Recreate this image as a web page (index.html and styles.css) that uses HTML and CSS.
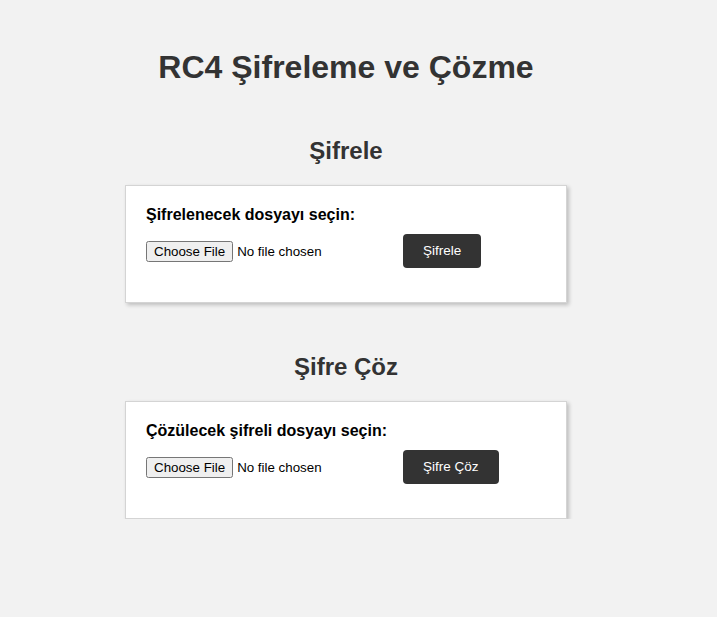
FILE: index.html
```html
<!DOCTYPE html>
<html lang="tr">
<head>
<meta charset="utf-8">
<title>RC4 Şifreleme ve Çözme</title>
<link rel="stylesheet" href="styles.css">
</head>
<body>
<div class="page">
  <h1 class="title">RC4 Şifreleme ve Çözme</h1>
  <section class="section section-first">
    <h2 class="section-title">Şifrele</h2>
    <form class="card">
      <label class="card-label" for="enc">Şifrelenecek dosyayı seçin:</label>
      <div class="row">
        <input class="file" type="file" id="enc">
        <button class="btn" type="button">Şifrele</button>
      </div>
    </form>
  </section>
  <section class="section section-second">
    <h2 class="section-title">Şifre Çöz</h2>
    <form class="card">
      <label class="card-label" for="dec">Çözülecek şifreli dosyayı seçin:</label>
      <div class="row">
        <input class="file" type="file" id="dec">
        <button class="btn" type="button">Şifre Çöz</button>
      </div>
    </form>
  </section>
</div>
</body>
</html>
```
FILE: styles.css
```css
html, body {
  margin: 0;
  padding: 0;
  background: #f2f2f2;
}
body {
  font-family: "Liberation Sans", Arial, Helvetica, sans-serif;
  color: #333;
}
.page {
  width: 692px;
  padding-top: 49px;
  display: flex;
  flex-direction: column;
  align-items: center;
}
.title {
  margin: 0;
  font-size: 32px;
  line-height: 37px;
  font-weight: bold;
  color: #333;
  text-align: center;
}
.section {
  display: flex;
  flex-direction: column;
  align-items: center;
}
.section-first { margin-top: 51px; }
.section-second { margin-top: 50px; }
.section-title {
  margin: 0 0 20px;
  font-size: 24px;
  line-height: 28px;
  font-weight: bold;
  color: #333;
}
.card {
  box-sizing: border-box;
  width: 442px;
  height: 118px;
  margin: 0;
  padding: 20px;
  background: #fff;
  border: 1px solid #d4d4d4;
  box-shadow: 2px 2px 4px rgba(0, 0, 0, 0.22);
}
.card-label {
  display: block;
  font-size: 16px;
  line-height: 18px;
  font-weight: bold;
  color: #000;
  margin-bottom: 10px;
}
.row {
  display: flex;
  align-items: center;
  gap: 20px;
}
.file {
  width: 237px;
  font-family: "Liberation Sans", Arial, sans-serif;
  font-size: 13.33px;
  color: #000;
}
.btn {
  font-family: "Liberation Sans", Arial, sans-serif;
  font-size: 13.5px;
  line-height: 16px;
  padding: 9px 20px;
  background: #333;
  color: #fff;
  border: none;
  border-radius: 4px;
}
```
